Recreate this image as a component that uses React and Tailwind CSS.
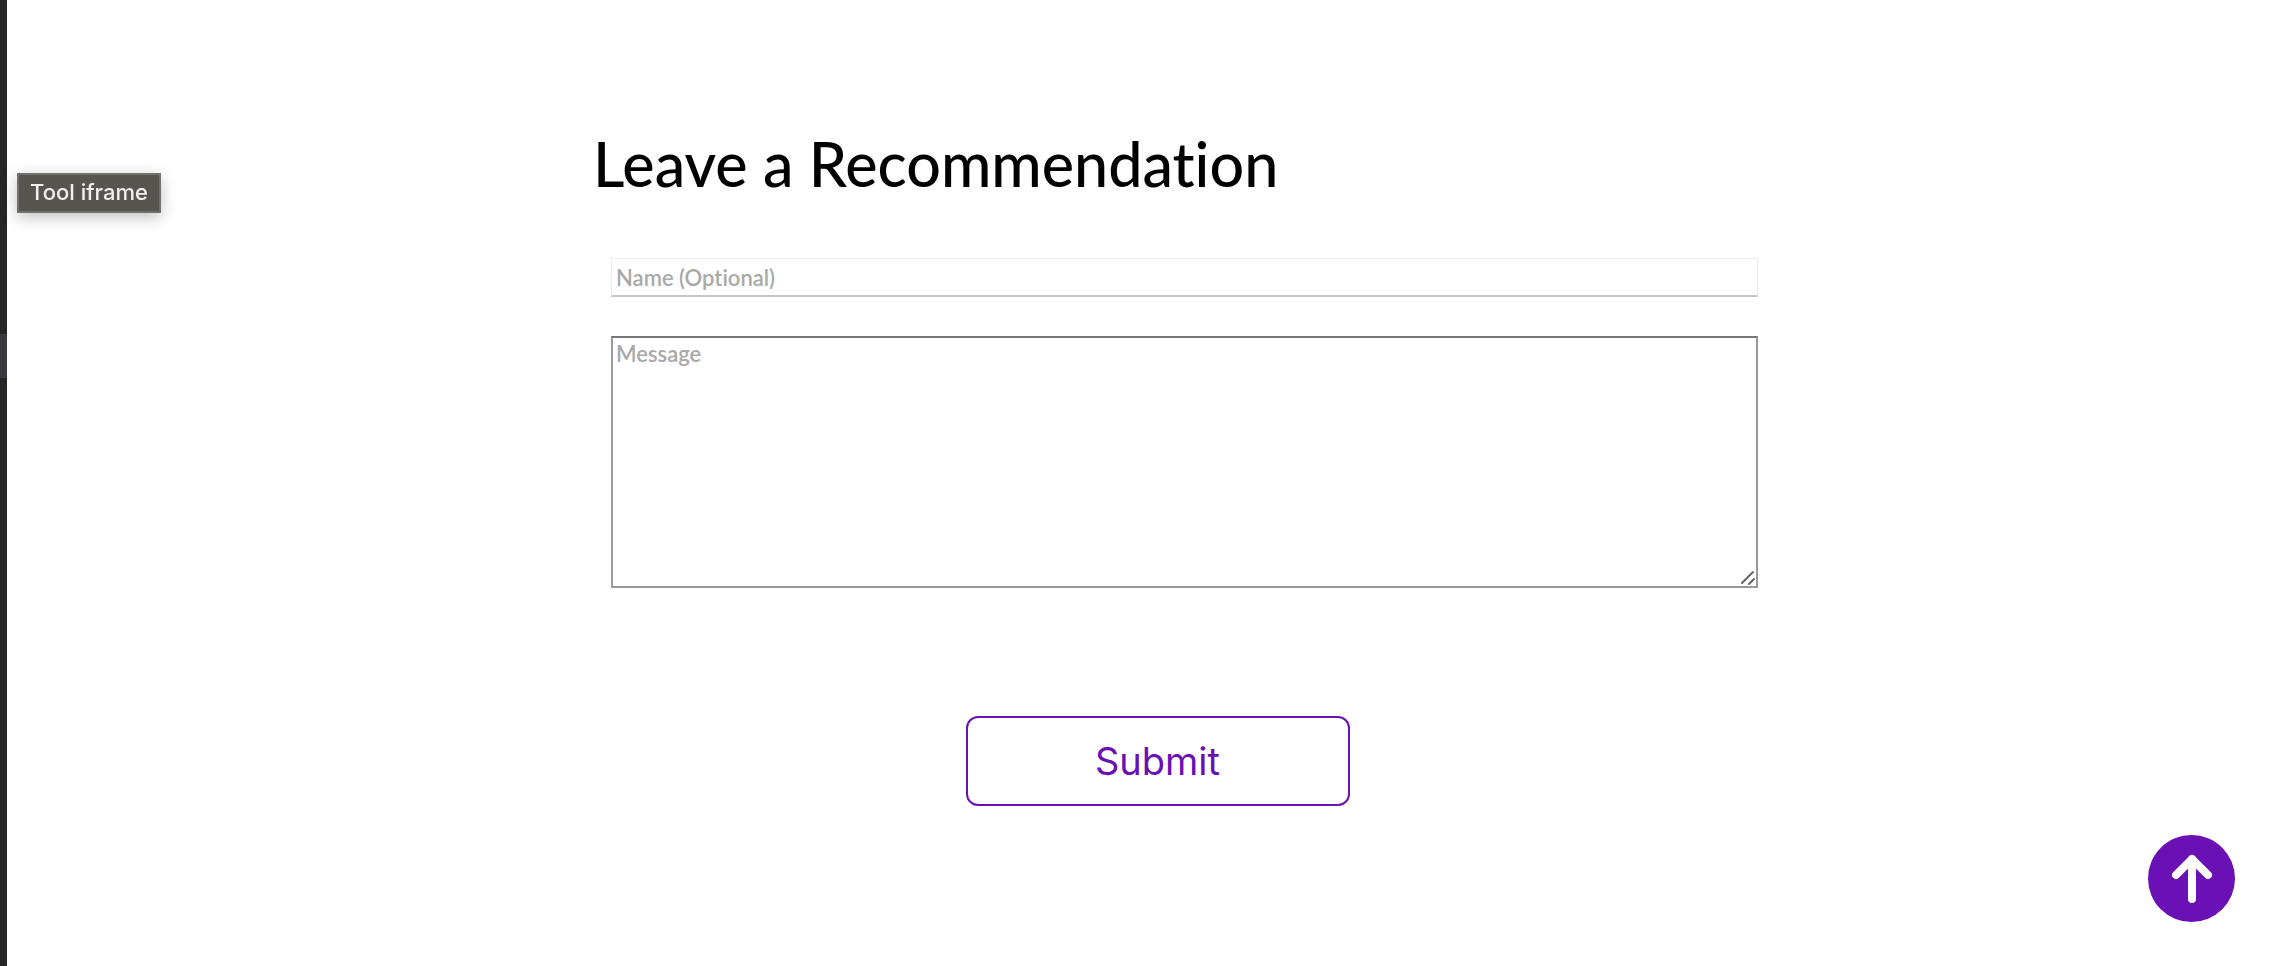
function SidebarEdge() {
  return (
    <aside className="w-[7px] shrink-0 bg-[#262626] pt-[334px]">
      <div className="h-11 bg-[#3a3940]" />
    </aside>
  );
}

function RecommendationForm() {
  return (
    <section className="mx-auto max-w-[1165px] pt-[120px]">
      <h1 className="text-[61px] leading-[88px] font-medium text-black">
        Leave a Recommendation
      </h1>
      <form className="mt-[50px]" onSubmit={(event) => event.preventDefault()}>
        <div className="flex flex-col gap-[39px] pl-[18px]">
          <input
            type="text"
            aria-label="Name (Optional)"
            placeholder="Name (Optional)"
            className="h-[39px] w-full border border-b-2 border-[#ebebeb] border-b-[#c6c6c6] px-1 text-[22px] font-semibold outline-none placeholder:text-[#a9a9a9]"
          />
          <div className="relative">
            <textarea
              aria-label="Message"
              placeholder="Message"
              className="block h-[252px] w-full resize-none border-2 border-[#999999] border-t-[#767676] px-[3px] text-[22px] leading-8 font-semibold outline-none placeholder:text-[#a9a9a9]"
            />
            <svg
              aria-hidden="true"
              viewBox="0 0 16 16"
              className="pointer-events-none absolute right-[2px] bottom-[2px] size-4"
              fill="none"
              stroke="#656565"
              strokeWidth="2"
              strokeLinecap="round"
            >
              <path d="M2 13 13 2M9 14l5-5" />
            </svg>
          </div>
        </div>
        <div className="flex justify-center pt-32 pr-9">
          <button
            type="submit"
            className="h-[90px] w-[384px] rounded-xl border-2 border-[#6a11b5] bg-white font-['Inter',sans-serif] text-[38px] text-[#6a11b5]"
          >
            Submit
          </button>
        </div>
      </form>
    </section>
  );
}

export default function App() {
  return (
    <div className="flex min-h-screen bg-white font-['Lato','Open_Sans',sans-serif] [font-variant-ligatures:none]">
      <SidebarEdge />
      <main className="min-w-0 flex-1 pl-[52px]">
        <RecommendationForm />
      </main>
      <div
        role="tooltip"
        className="fixed top-[173px] left-[17px] flex h-10 w-36 items-center justify-center border-2 border-[#70706e] bg-[#575550] pb-px font-['Inter',sans-serif] text-[22px] font-medium text-[#f0f0ef] shadow-[0_4px_16px_rgba(0,0,0,0.25)]"
      >
        Tool iframe
      </div>
      <a
        href="#top"
        aria-label="Back to top"
        className="fixed right-[57px] bottom-11 flex size-[87px] items-center justify-center rounded-full bg-[#6a11b5]"
      >
        <svg
          aria-hidden="true"
          viewBox="0 0 87 87"
          className="size-full"
          fill="none"
          stroke="white"
          strokeWidth="8"
          strokeLinecap="round"
          strokeLinejoin="round"
        >
          <path d="M44 64V24M28 40l16-16 16 16" />
        </svg>
      </a>
    </div>
  );
}
